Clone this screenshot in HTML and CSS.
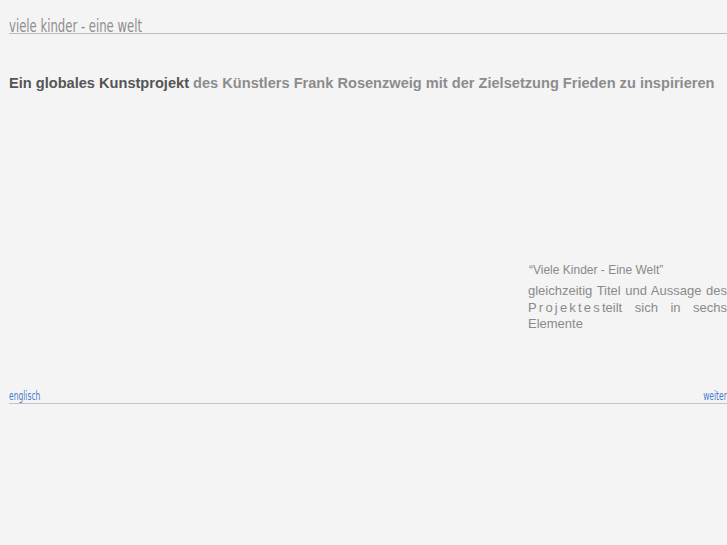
FILE: index.html
```html
<!DOCTYPE html>
<html lang="de">
<head>
    <meta charset="UTF-8">
    <title>viele kinder - eine welt</title>
    <link rel="stylesheet" href="styles.css">
</head>
<body>

<div class="page">
    <div class="header">
        <span class="logo">viele kinder - eine welt</span>
    </div>

    <h1 class="intro"><strong>Ein globales Kunstprojekt</strong> des Künstlers Frank Rosenzweig mit der Zielsetzung Frieden zu inspirieren</h1>

    <div class="content">
        <div class="aside">
            <p class="quote">“Viele Kinder - Eine Welt”</p>
            <p class="text">gleichzeitig Titel und Aussage des <span class="spaced">Projektes</span>teilt sich in sechs Elemente</p>
        </div>
    </div>

    <div class="footer">
        <a href="#" class="left">englisch</a>
        <a href="#" class="right">weiter</a>
    </div>
</div>

</body>
</html>
```

FILE: styles.css
```css
html, body {
    margin: 0;
    background: #f4f4f4;
}
.page {
    padding-left: 9px;
    font-family: "Liberation Sans", Arial, sans-serif;
}
.header {
    height: 33px;
    border-bottom: 1px solid #bcbcbc;
    display: flex;
    align-items: flex-end;
}
.logo {
    font-family: "DejaVu Sans Condensed", "Liberation Sans Narrow", sans-serif;
    font-size: 18px;
    color: #8d8d8d;
    line-height: 15px;
    display: inline-block;
    transform: scaleX(0.72);
    transform-origin: left bottom;
}
.intro {
    margin: 40px 0 0;
    font-size: 14.6px;
    line-height: 18px;
    color: #8c8c8c;
    font-weight: bold;
    white-space: nowrap;
}
.intro strong {
    color: #555;
}
.content {
    height: 297px;
    display: flex;
    justify-content: flex-end;
}
.aside {
    width: 199px;
    padding-top: 171px;
    color: #8a8a8a;
    font-size: 13px;
}
.quote {
    margin: 0 0 6px;
    font-size: 12px;
    padding-left: 1px;
}
.text {
    margin: 0;
    line-height: 16.5px;
    text-align: justify;
}
.spaced {
    letter-spacing: 2.2px;
}
.footer {
    display: flex;
    justify-content: space-between;
    border-bottom: 1px solid #c4c4c4;
    height: 14px;
}
.footer a {
    font-family: "DejaVu Sans Condensed", "Liberation Sans Narrow", sans-serif;
    font-size: 12px;
    color: #4a7bd0;
    text-decoration: none;
    line-height: 14px;
    display: inline-block;
    transform: scaleX(0.7);
}
.footer .left {
    transform-origin: left center;
}
.footer .right {
    transform-origin: right center;
}
```
